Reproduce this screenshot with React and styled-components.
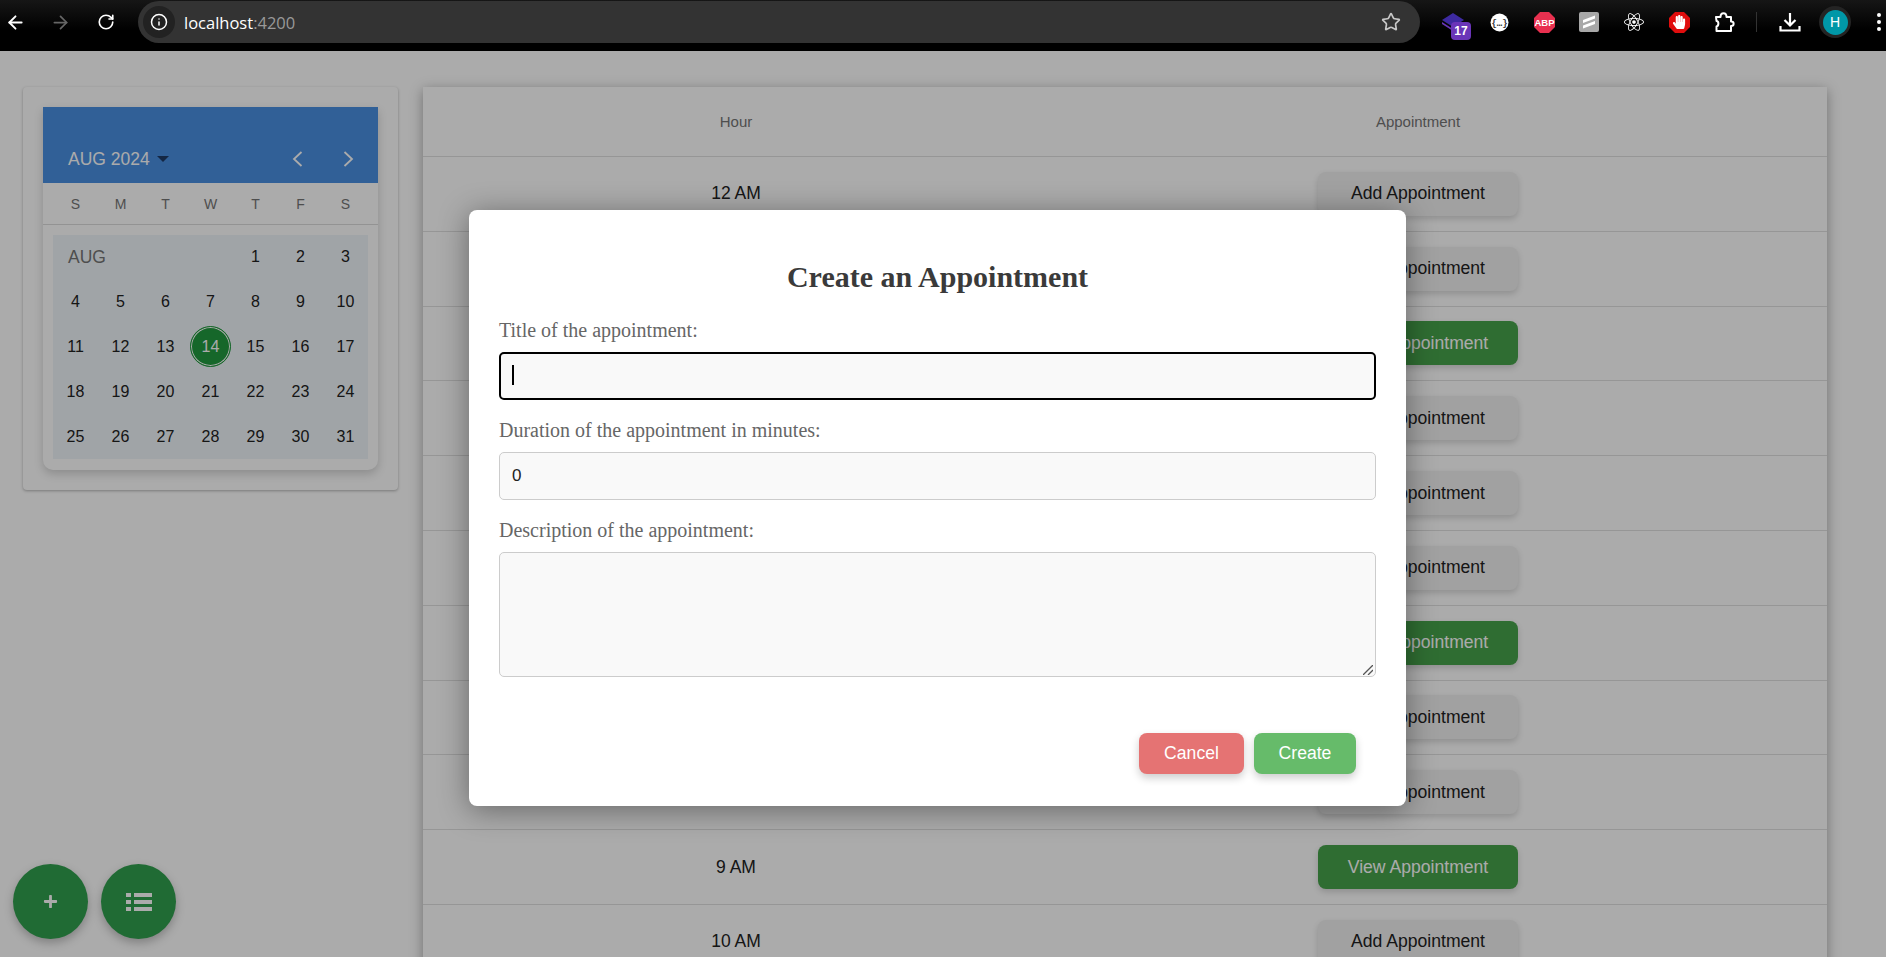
import React from "react";
import styled, { createGlobalStyle } from "styled-components";
import { ArrowLeft, ArrowRight, RotateCw, Info, Star } from "lucide-react";
import { FaPlus, FaReact, FaHandPaper } from "react-icons/fa";

const GlobalStyle = createGlobalStyle`
  html, body { margin: 0; padding: 0; height: 100%; overflow: hidden; background: #fff; }
  * { box-sizing: border-box; }
`;

const Shell = styled.div`
  position: relative;
  height: 957px;
  overflow: hidden;
  font-family: "Liberation Sans", Arial, sans-serif;
  color: #222;
`;

/* browser chrome */
const Toolbar = styled.div`
  height: 51px;
  display: flex;
  align-items: flex-start;
  padding-top: 1px;
  background: linear-gradient(#161616, #000 60%);
`;
const ToolSlot = styled.div`
  width: ${p => p.$w || 30}px;
  height: 42px;
  flex: none;
  margin-left: ${p => p.$ml || 0}px;
  display: flex;
  align-items: center;
  justify-content: center;
  position: relative;
  color: ${p => p.$color || "#fff"};
`;
const Omnibox = styled.div`
  flex: none;
  width: 1282px;
  height: 42px;
  margin-left: 17px;
  padding: 0 19px 0 5px;
  border-radius: 21px;
  background: #333;
  display: flex;
  align-items: center;
`;
const InfoChip = styled.div`
  width: 32px;
  height: 32px;
  border-radius: 50%;
  background: #222;
  color: #fff;
  display: flex;
  align-items: center;
  justify-content: center;
`;
const Url = styled.div`
  margin-left: 9px;
  font-family: "Open Sans", sans-serif;
  font-size: 16.5px;
  color: #fff;
  flex: 1;
  span { color: #999; }
`;
const Divider = styled.div`
  width: 1px;
  height: 20px;
  margin: 11px 0 0 17px;
  background: #333;
  flex: none;
`;
const Badge = styled.span`
  position: absolute;
  left: 12px;
  top: 21px;
  width: 20px;
  height: 18px;
  border-radius: 4px;
  background: #6a35b8;
  color: #fff;
  font-size: 12px;
  font-weight: 700;
  text-align: center;
  line-height: 18px;
`;
const AvatarRing = styled.div`
  width: 32px;
  height: 32px;
  border-radius: 50%;
  background: #242424;
  display: flex;
  align-items: center;
  justify-content: center;
`;
const Avatar = styled.div`
  width: 25px;
  height: 25px;
  border-radius: 50%;
  background: #0097a7;
  color: #fff;
  font-size: 14px;
  text-align: center;
  line-height: 25px;
`;
const Kebab = styled.div`
  display: flex;
  flex-direction: column;
  gap: 3px;
  i { width: 4px; height: 4px; border-radius: 50%; background: #fff; display: block; }
`;

/* page */
const Page = styled.div`
  height: 906px;
  padding: 36px 0 0 23px;
  display: flex;
  gap: 25px;
  align-items: flex-start;
  background: #fff;
`;
const SideCard = styled.div`
  width: 375px;
  padding: 20px;
  flex: none;
  border-radius: 4px;
  background: #fff;
  box-shadow: 0 1px 3px rgba(0, 0, 0, 0.3);
`;
const Calendar = styled.div`
  border-radius: 0 0 10px 10px;
  background: #fff;
  padding-bottom: 11px;
  box-shadow: 0 4px 10px rgba(0, 0, 0, 0.18);
`;
const CalHeader = styled.div`
  height: 76px;
  padding: 0 22px 0 25px;
  display: flex;
  align-items: flex-end;
  background: #4a90e2;
  color: #fff;
`;
const CalHeaderRow = styled.div`
  flex: 1;
  height: 38px;
  padding-bottom: 10px;
  display: flex;
  align-items: center;
`;
const MonthLabel = styled.div`
  font-size: 17.5px;
  flex: 1;
  display: flex;
  align-items: center;
  &::after {
    content: "";
    margin-left: 7px;
    border: 6px solid transparent;
    border-top-color: #1f3b66;
    border-bottom: 0;
  }
`;
const Chevron = styled.div`
  width: 14px;
  margin-left: ${p => p.$ml || 0}px;
  display: flex;
  color: #fff;
`;
const WeekRow = styled.div`
  height: 42px;
  padding: 0 10px;
  display: grid;
  grid-template-columns: repeat(7, 45px);
  align-items: center;
  justify-items: center;
  border-bottom: 1px solid #dcdcdc;
  color: #757575;
  font-size: 14px;
  margin-bottom: 10px;
`;
const DayGrid = styled.div`
  margin: 0 10px;
  display: grid;
  grid-template-columns: repeat(7, 45px);
  grid-auto-rows: 44.8px;
  background: #eff5fa;
  font-size: 16px;
`;
const MonthCell = styled.div`
  grid-column: span 4;
  padding-left: 15px;
  display: flex;
  align-items: center;
  color: #757575;
  font-size: 17.5px;
`;
const Day = styled.div`
  display: flex;
  align-items: center;
  justify-content: center;
`;
const Selected = styled.div`
  width: 41px;
  height: 41px;
  border-radius: 50%;
  background: #229a3f;
  color: #fff;
  display: flex;
  align-items: center;
  justify-content: center;
  border: 1px solid #229a3f;
  box-shadow: inset 0 0 0 1px #fff;
`;

const TableCard = styled.div`
  width: 1404px;
  flex: none;
  background: #fff;
  box-shadow: 0 3px 12px rgba(0, 0, 0, 0.35);
`;
const Row = styled.div`
  height: ${p => (p.$head ? 70 : 74.8)}px;
  padding-right: 40px;
  display: grid;
  grid-template-columns: 626px 1fr;
  align-items: center;
  justify-items: center;
  border-bottom: 1px solid #e0e0e0;
  color: ${p => (p.$head ? "#757575" : "#222")};
  font-size: ${p => (p.$head ? 15 : 17.5)}px;
`;
const ApptButton = styled.button`
  width: 200px;
  height: 44px;
  border: 0;
  border-radius: 8px;
  font-family: inherit;
  font-size: 17.6px;
  color: ${p => (p.$view ? "#fff" : "#222")};
  background: ${p => (p.$view ? "#47a34b" : "#f0f0f0")};
  box-shadow: 0 3px 6px rgba(0, 0, 0, 0.16);
`;

const Fab = styled.div`
  position: absolute;
  left: ${p => p.$left}px;
  top: 864px;
  width: 75px;
  height: 75px;
  border-radius: 50%;
  background: #30a04e;
  color: #fff;
  display: flex;
  align-items: center;
  justify-content: center;
  box-shadow: 0 4px 10px rgba(0, 0, 0, 0.25);
`;

/* modal */
const Scrim = styled.div`
  position: absolute;
  left: 0;
  right: 0;
  top: 51px;
  bottom: 0;
  padding: 159px 0 0 469px;
  background: rgba(0, 0, 0, 0.33);
`;
const Modal = styled.div`
  width: 937px;
  height: 596px;
  padding: 0 30px;
  border-radius: 8px;
  background: #fff;
  box-shadow: 0 4px 30px rgba(0, 0, 0, 0.4);
  font-family: "Liberation Serif", "Times New Roman", serif;
`;
const Title = styled.h2`
  margin: 0;
  padding: 50px 0 27px;
  text-align: center;
  font-size: 30px;
  line-height: 33px;
  color: #3a3a3a;
`;
const Field = styled.div`
  position: relative;
  margin-bottom: 20px;
`;
const Label = styled.label`
  display: block;
  height: 21px;
  margin-bottom: 11px;
  font-size: 20px;
  line-height: 21px;
  color: #666;
`;
const TextInput = styled.input`
  display: block;
  width: 100%;
  height: 48px;
  padding: 0 12px;
  border: ${p => (p.$focus ? "2px solid #000" : "1px solid #ccc")};
  padding-left: ${p => (p.$focus ? 11 : 12)}px;
  border-radius: 5px;
  outline: none;
  background: #f9f9f9;
  color: #222;
  font-family: "Liberation Sans", Arial, sans-serif;
  font-size: 17px;
`;
const Caret = styled.span`
  position: absolute;
  left: 13px;
  top: 45px;
  width: 2px;
  height: 20px;
  background: #000;
`;
const TextArea = styled.textarea`
  display: block;
  width: 100%;
  height: 125px;
  border: 1px solid #ccc;
  border-radius: 5px;
  outline: none;
  resize: none;
  background: #f9f9f9;
`;
const Grip = styled.svg`
  position: absolute;
  right: 3px;
  bottom: 2px;
`;
const Footer = styled.div`
  margin-top: 56px;
  padding-right: 20px;
  display: flex;
  justify-content: flex-end;
  gap: 10px;
`;
const ModalButton = styled.button`
  width: ${p => p.$w}px;
  height: 41px;
  border: 0;
  border-radius: 8px;
  background: ${p => p.$bg};
  color: #fff;
  font-family: "Liberation Sans", Arial, sans-serif;
  font-size: 17.6px;
  box-shadow: 0 4px 8px rgba(0, 0, 0, 0.2);
`;

const Stack = () => (
  <svg width="24" height="22" viewBox="0 0 24 22">
    <path d="M11 2l11 7-11 7L0 9z" fill="#3d2aa0" />
    <path d="M0 13l11 7 11-7v-2l-11 7L0 11z" fill="#6a35b8" />
  </svg>
);
const Octagon = ({ fill, children }) => (
  <svg width="21" height="21" viewBox="0 0 21 21">
    <path d="M6 0h9l6 6v9l-6 6H6l-6-6V6z" fill={fill} />
    {children}
  </svg>
);
const Braces = () => (
  <svg width="19" height="19" viewBox="0 0 19 19">
    <circle cx="9.5" cy="9.5" r="9" fill="#fff" />
    <text x="9.5" y="12.5" fontSize="9" fontWeight="700" textAnchor="middle" fill="#333" fontFamily="Liberation Mono">{"{…}"}</text>
  </svg>
);
const Slashes = () => (
  <svg width="20" height="20" viewBox="0 0 20 20">
    <rect width="20" height="20" rx="2" fill="#a8a8a8" />
    <path d="M4 8l12-4.500v3L4 11zM4 13.500L16 9v3L4 16.500z" fill="#fff" />
  </svg>
);
const PuzzleIcon = () => (
  <svg width="21" height="21" viewBox="0 0 21 21" fill="none" stroke="#fff" strokeWidth="2" strokeLinejoin="round">
    <path d="M2 5h4.500c0-5 6-5 6 0H17v4.500c3.500 0 3.500 4.500 0 4.500V19H2.500v-4.500c2.500-.5 2.500-5.500 0-5.500z" />
  </svg>
);
const DownloadIcon = () => (
  <svg width="22" height="22" viewBox="0 0 22 22" fill="none" stroke="#fff" strokeWidth="2.200">
    <path d="M11 2v12M5.500 9l5.500 5.500L16.500 9M1.500 15v4.500h19V15" />
  </svg>
);
const ChevronIcon = ({ left }) => (
  <svg width="13" height="18" viewBox="0 0 13 18" fill="none" stroke="#fff" strokeWidth="1.800">
    <path d={left ? "M10.500 2L3 9l7.500 7" : "M2.500 2L10 9l-7.500 7"} />
  </svg>
);
const ListIcon = () => (
  <svg width="26" height="18" viewBox="0 0 26 18" fill="currentColor">
    <rect x="0" y="0" width="5" height="4" />
    <rect x="8" y="0" width="18" height="4" />
    <rect x="0" y="7" width="5" height="4" />
    <rect x="8" y="7" width="18" height="4" />
    <rect x="0" y="14" width="5" height="4" />
    <rect x="8" y="14" width="18" height="4" />
  </svg>
);

const hours = [
  ["12 AM"], ["1 AM"], ["2 AM", true], ["3 AM"], ["4 AM"], ["5 AM"],
  ["6 AM", true], ["7 AM"], ["8 AM"], ["9 AM", true], ["10 AM"]
];
const weekdays = ["S", "M", "T", "W", "T", "F", "S"];
const days = Array.from({ length: 31 }, (_, i) => i + 1);

export default function App() {
  return (
    <Shell>
      <GlobalStyle />
      <Toolbar>
        <ToolSlot><ArrowLeft size={21} strokeWidth={2.200} /></ToolSlot>
        <ToolSlot $ml={15} $color="#666"><ArrowRight size={21} strokeWidth={2} /></ToolSlot>
        <ToolSlot $ml={16}><RotateCw size={18} strokeWidth={2.200} /></ToolSlot>
        <Omnibox>
          <InfoChip><Info size={18} strokeWidth={2} /></InfoChip>
          <Url>localhost<span>:4200</span></Url>
          <Star size={20} color="#c8c8c8" strokeWidth={2} />
        </Omnibox>
        <ToolSlot $ml={19}><Stack /><Badge>17</Badge></ToolSlot>
        <ToolSlot $ml={15}><Braces /></ToolSlot>
        <ToolSlot $ml={15}>
          <Octagon fill="#e8304f">
            <text x="10.500" y="14" fontSize="9.500" fontWeight="700" textAnchor="middle" fill="#fff" fontFamily="Liberation Sans">ABP</text>
          </Octagon>
        </ToolSlot>
        <ToolSlot $ml={15}><Slashes /></ToolSlot>
        <ToolSlot $ml={15}><FaReact size={20} /></ToolSlot>
        <ToolSlot $ml={15}>
          <Octagon fill="#e00d0d" />
          <FaHandPaper size={14} style={{ position: "absolute" }} />
        </ToolSlot>
        <ToolSlot $ml={15}><PuzzleIcon /></ToolSlot>
        <Divider />
        <ToolSlot $ml={18}><DownloadIcon /></ToolSlot>
        <ToolSlot $ml={14} $w={32}><AvatarRing><Avatar>H</Avatar></AvatarRing></ToolSlot>
        <ToolSlot $ml={20} $w={16}><Kebab><i /><i /><i /></Kebab></ToolSlot>
      </Toolbar>

      <Page>
        <SideCard>
          <Calendar>
            <CalHeader>
              <CalHeaderRow>
                <MonthLabel>AUG 2024</MonthLabel>
                <Chevron><ChevronIcon left /></Chevron>
                <Chevron $ml={37}><ChevronIcon /></Chevron>
              </CalHeaderRow>
            </CalHeader>
            <WeekRow>{weekdays.map((d, i) => <span key={i}>{d}</span>)}</WeekRow>
            <DayGrid>
              <MonthCell>AUG</MonthCell>
              {days.map(d => (
                <Day key={d}>{d === 14 ? <Selected>{d}</Selected> : d}</Day>
              ))}
            </DayGrid>
          </Calendar>
        </SideCard>

        <TableCard>
          <Row $head><span>Hour</span><span>Appointment</span></Row>
          {hours.map(([h, view]) => (
            <Row key={h}>
              <span>{h}</span>
              <ApptButton $view={view}>{view ? "View Appointment" : "Add Appointment"}</ApptButton>
            </Row>
          ))}
        </TableCard>
      </Page>

      <Fab $left={13}><FaPlus size={15} /></Fab>
      <Fab $left={101}><ListIcon /></Fab>

      <Scrim>
        <Modal>
          <Title>Create an Appointment</Title>
          <Field>
            <Label>Title of the appointment:</Label>
            <TextInput $focus readOnly value="" />
            <Caret />
          </Field>
          <Field>
            <Label>Duration of the appointment in minutes:</Label>
            <TextInput readOnly value="0" />
          </Field>
          <Field>
            <Label>Description of the appointment:</Label>
            <TextArea readOnly value="" />
            <Grip width="10" height="10" viewBox="0 0 10 10" stroke="#555" strokeWidth="1.300">
              <path d="M0 10L10 0M5 10L10 5" />
            </Grip>
          </Field>
          <Footer>
            <ModalButton $w={105} $bg="#e57373">Cancel</ModalButton>
            <ModalButton $w={102} $bg="#66bb6a">Create</ModalButton>
          </Footer>
        </Modal>
      </Scrim>
    </Shell>
  );
}
